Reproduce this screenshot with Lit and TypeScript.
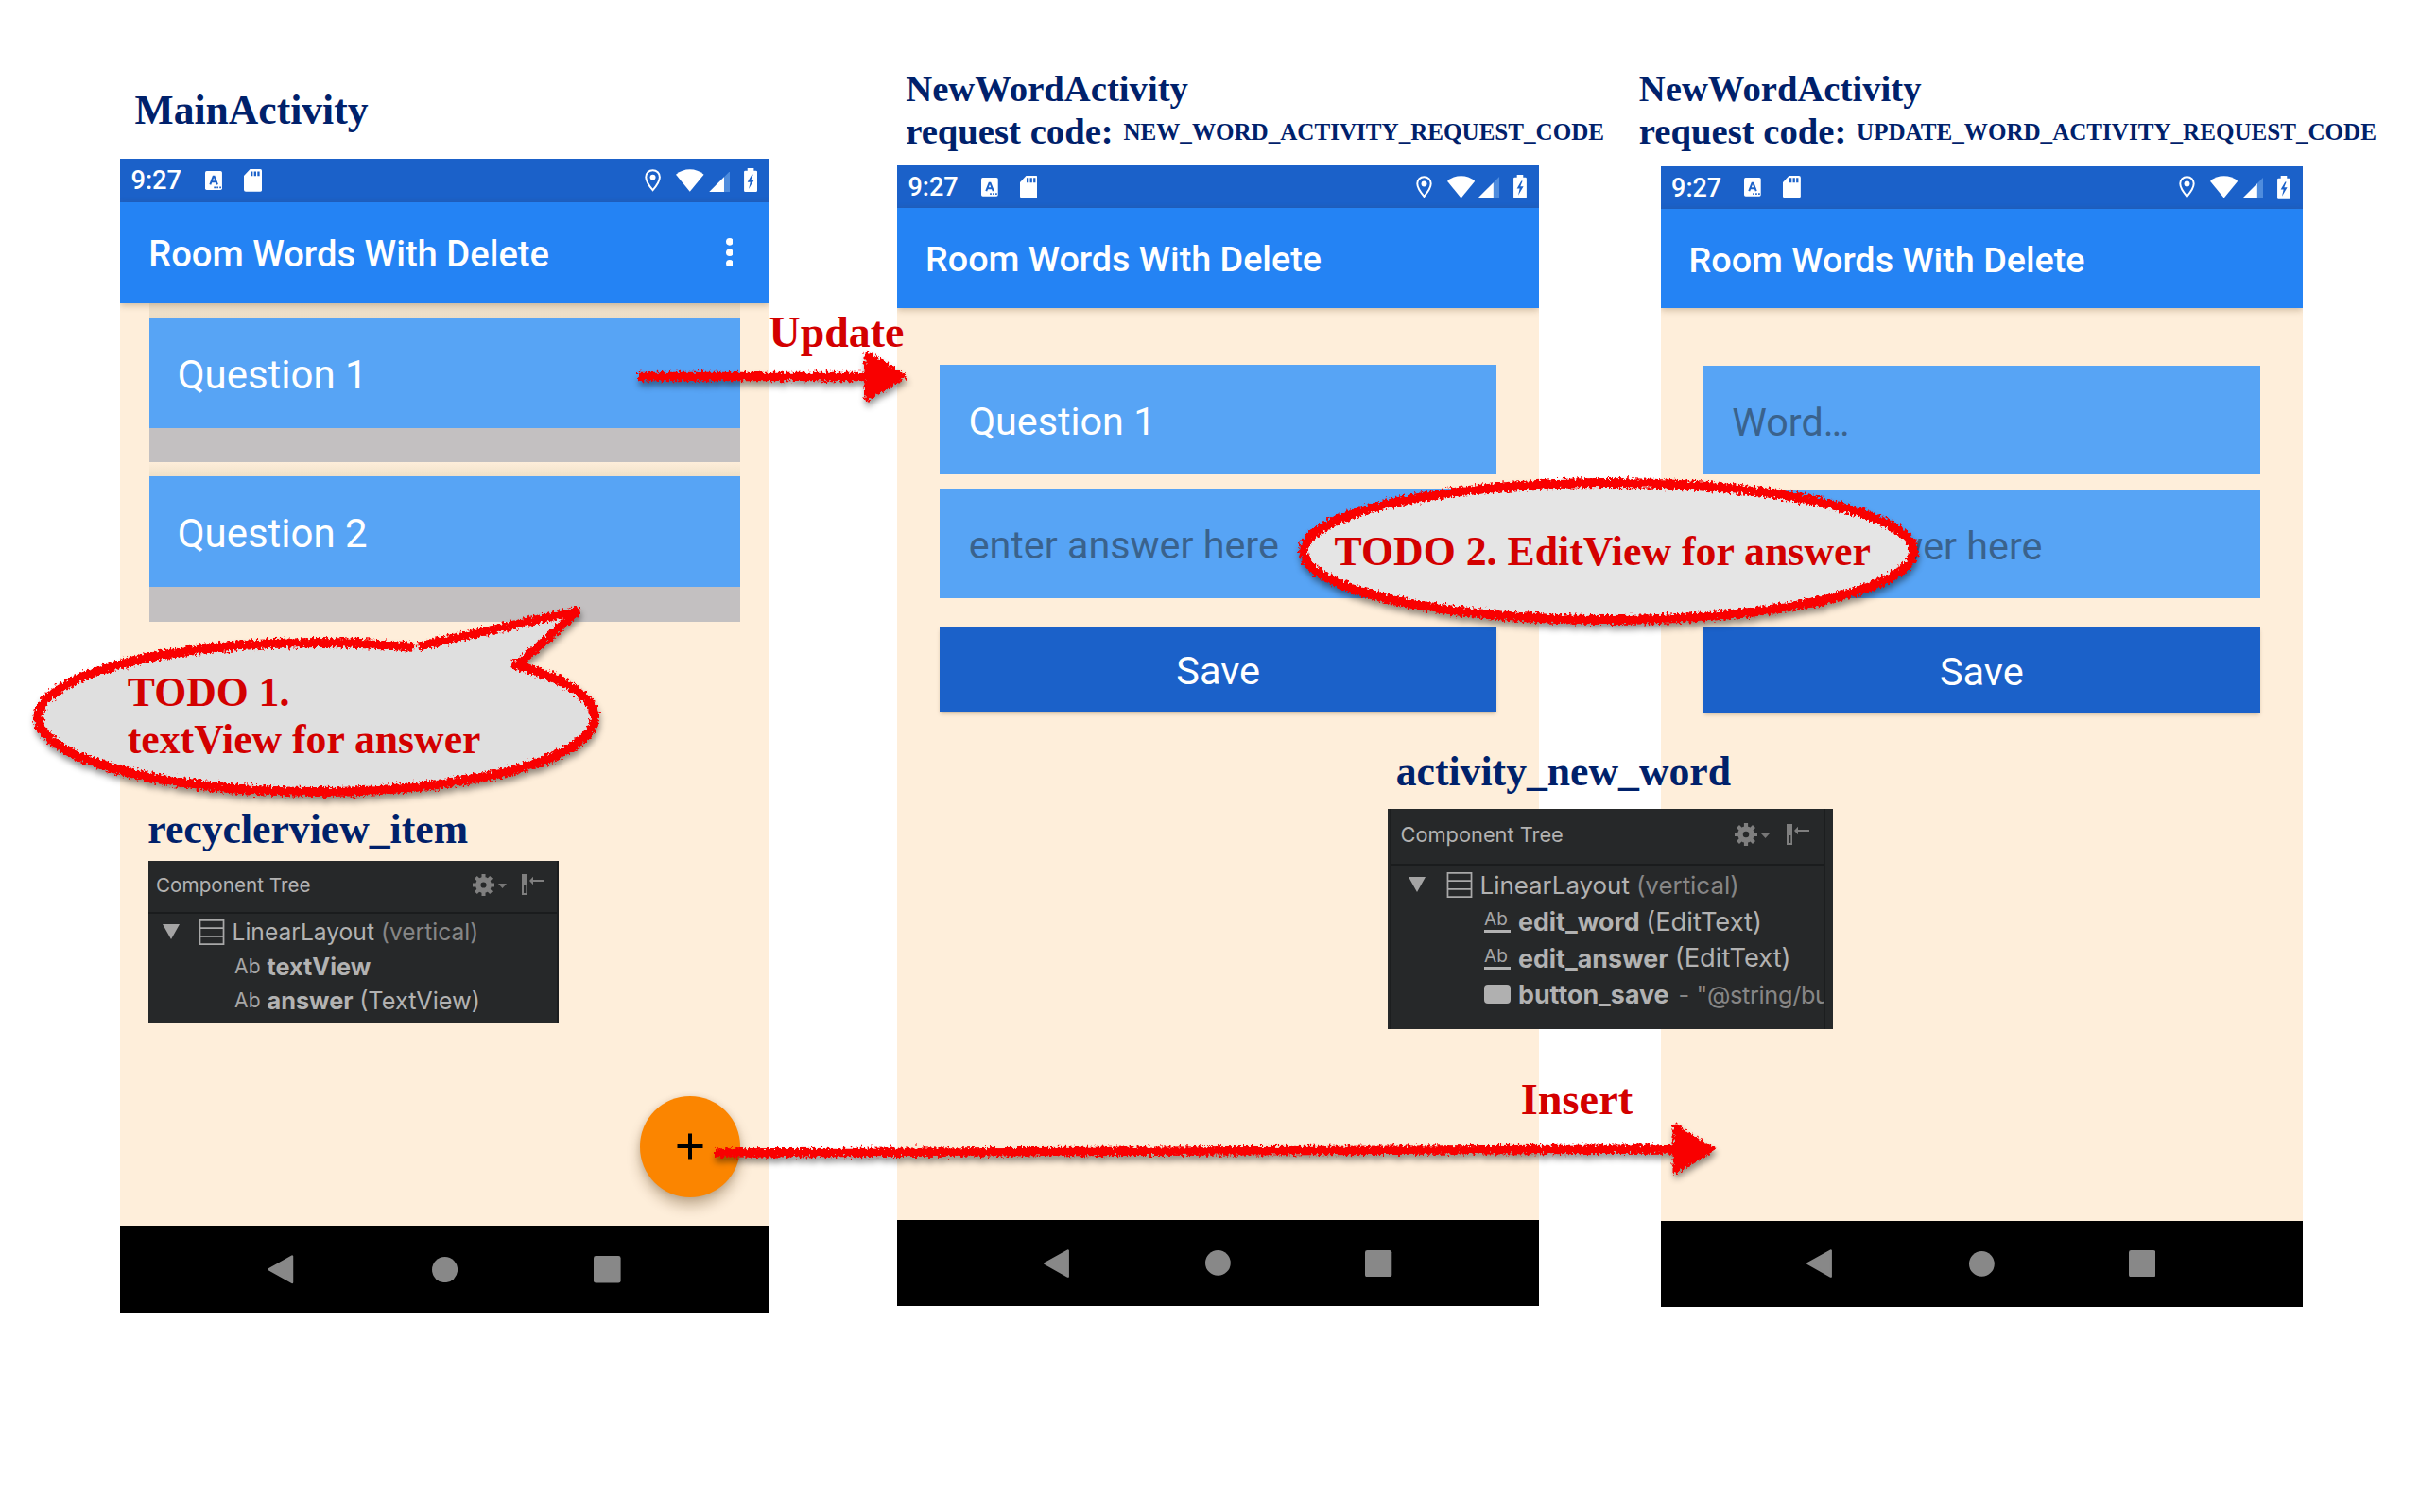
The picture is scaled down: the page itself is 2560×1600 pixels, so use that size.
import { LitElement, html, svg, css, nothing } from "lit";
import { customElement, property } from "lit/decorators.js";

/** Android screen, laid out in dp on a 360 x 640 grid; --dp sets its scale. */
@customElement("phone-screen")
export class PhoneScreen extends LitElement {
  @property({ type: Boolean }) menu = false;

  static styles = css`
    :host {
      display: flex;
      flex-direction: column;
      width: calc(var(--dp) * 360);
      height: calc(var(--dp) * 640);
      overflow: hidden;
      background: #feeeda;
      font-family: Roboto, "Liberation Sans", sans-serif;
      color: #fff;
    }
    svg { display: block; flex: none; }
    .status {
      display: flex;
      align-items: center;
      flex: none;
      box-sizing: border-box;
      height: calc(var(--dp) * 24);
      padding: 0 calc(var(--dp) * 6.8) 0 calc(var(--dp) * 6);
      background: #1b61c9;
    }
    .time {
      width: calc(var(--dp) * 41);
      font-size: calc(var(--dp) * 14.3);
      font-weight: 500;
      line-height: 1;
      padding-top: calc(var(--dp) * 1);
    }
    .badge { width: calc(var(--dp) * 9.4); height: calc(var(--dp) * 10.5); margin-right: calc(var(--dp) * 12.2); }
    .sd { width: calc(var(--dp) * 10); height: calc(var(--dp) * 12.5); }
    .grow { flex: 1; }
    .pin { width: calc(var(--dp) * 9); height: calc(var(--dp) * 12.5); margin-right: calc(var(--dp) * 8.5); }
    .wifi { width: calc(var(--dp) * 15.5); height: calc(var(--dp) * 12.5); margin-right: calc(var(--dp) * 2.4); }
    .signal { width: calc(var(--dp) * 11.7); height: calc(var(--dp) * 11.7); margin: calc(var(--dp) * 0.9) calc(var(--dp) * 7.9) 0 0; }
    .battery { width: calc(var(--dp) * 7.4); height: calc(var(--dp) * 13.1); }
    .appbar {
      display: flex;
      align-items: center;
      justify-content: space-between;
      flex: none;
      box-sizing: border-box;
      position: relative;
      z-index: 1;
      height: calc(var(--dp) * 56);
      padding: 0 calc(var(--dp) * 20.2) 0 calc(var(--dp) * 15.8);
      background: #2483f4;
      box-shadow: 0 2px 7px rgba(90, 60, 20, 0.3);
    }
    .title {
      font-size: calc(var(--dp) * 20);
      font-weight: 500;
      line-height: 1;
      padding-top: calc(var(--dp) * 2.2);
      white-space: nowrap;
    }
    .dots { width: calc(var(--dp) * 4); height: calc(var(--dp) * 16); }
    .content { flex: 1; min-height: 0; position: relative; }
    .nav {
      display: flex;
      align-items: center;
      flex: none;
      height: calc(var(--dp) * 48.200);
      background: #000;
    }
    .back { width: calc(var(--dp) * 14.4); height: calc(var(--dp) * 16); margin-left: calc(var(--dp) * 82); }
    .home { width: calc(var(--dp) * 14.2); height: calc(var(--dp) * 14.2); margin-left: calc(var(--dp) * 76.5); }
    .recent { width: calc(var(--dp) * 15); height: calc(var(--dp) * 15); margin-left: calc(var(--dp) * 75.4); }
  `;

  render() {
    return html`
      <div class="status">
        <span class="time">9:27</span>
        <svg class="badge" viewBox="0 0 54 60">
          <rect width="54" height="60" rx="5" fill="#fff" />
          <path d="M16 43L26 17h3L39 43M20 34h15" fill="none" stroke="#1b61c9" stroke-width="6" />
          <path d="M28 52h5M37 52h5M46 52h5" stroke="#1b61c9" stroke-width="5" />
        </svg>
        <svg class="sd" viewBox="0 0 58 72">
          <path d="M20 0h32q6 0 6 6v60q0 6-6 6H6q-6 0-6-6V21z" fill="#fff" />
          <path d="M25 7v15M36 7v15M47 7v15" stroke="#1b61c9" stroke-width="7" />
        </svg>
        <span class="grow"></span>
        <svg class="pin" viewBox="0 0 51 72">
          <path d="M25.5 3.5C13 3.5 3.5 13 3.5 25.500C3.500 41 25.500 67 25.500 67S47.500 41 47.500 25.500C47.500 13 38 3.500 25.500 3.500z" fill="none" stroke="#fff" stroke-width="6" />
          <circle cx="25.500" cy="26" r="9" fill="#fff" />
        </svg>
        <svg class="wifi" viewBox="0 0 88 71">
          <path d="M0 17C24-5 64-5 88 17L44 71z" fill="#fff" />
        </svg>
        <svg class="signal" viewBox="0 0 67 67">
          <path d="M67 0v67H0z" fill="#4f8cdd" />
          <path d="M48 19v48H0z" fill="#fff" />
        </svg>
        <svg class="battery" viewBox="0 0 42 75">
          <path d="M11 0h20v8h7q4 0 4 4v59q0 4-4 4H4q-4 0-4-4V12q0-4 4-4h7z" fill="#fff" />
          <path d="M25 20L11 44h9L15 66L32 37H22l7-17z" fill="#1b61c9" />
        </svg>
      </div>
      <div class="appbar">
        <span class="title">Room Words With Delete</span>
        ${this.menu
          ? html`<svg class="dots" viewBox="0 0 4 16" fill="#fff">
              <circle cx="2" cy="2" r="2" /><circle cx="2" cy="8" r="2" /><circle cx="2" cy="14" r="2" />
            </svg>`
          : nothing}
      </div>
      <div class="content"><slot></slot></div>
      <div class="nav">
        <svg class="back" viewBox="0 0 58 64"><path d="M55 3v58L3 32z" fill="#888" stroke="#888" stroke-width="5" stroke-linejoin="round" /></svg>
        <svg class="home" viewBox="0 0 56 56"><circle cx="28" cy="28" r="28" fill="#888" /></svg>
        <svg class="recent" viewBox="0 0 60 60"><rect width="60" height="60" rx="5" fill="#888" /></svg>
      </div>
    `;
  }
}

interface TreeRow {
  icon: "text" | "edit" | "button";
  name: string;
  type?: string;
  value?: string;
}

/** Component Tree tool window; sizes are in px through custom properties. */
@customElement("component-tree")
export class ComponentTree extends LitElement {
  @property({ attribute: false }) rows: TreeRow[] = [];

  static styles = css`
    :host {
      display: flex;
      background: #262829;
      color: #b2b2b2;
      font-family: Inter, "Liberation Sans", sans-serif;
      overflow: hidden;
    }
    svg { display: block; flex: none; }
    .strip { flex: none; width: var(--strip); box-sizing: border-box; border-right: 2px solid #1c1e1f; }
    .body { flex: 1; min-width: 0; overflow: hidden; border-right: 2px solid #1c1e1f; }
    .head {
      display: flex;
      align-items: center;
      box-sizing: border-box;
      height: var(--head);
      padding: 0 var(--head-right) 4px var(--head-left);
      border-bottom: 2px solid #1a1c1d;
      margin-bottom: 1px;
      font-size: var(--title);
      white-space: nowrap;
    }
    .head span { flex: 1; }
    .gear { width: var(--gear); height: var(--gear); margin-right: 4px; }
    .caret { width: 9px; height: 5px; margin: 3px var(--caret-gap) 0 0; }
    .hide { width: 24px; height: 22px; }
    .row {
      display: flex;
      align-items: center;
      height: var(--row);
      white-space: nowrap;
      font-size: var(--name);
    }
    .root { padding-left: var(--tri-left); font-size: var(--root); }
    .tri { width: 18px; height: 16px; margin-right: var(--tri-gap); }
    .layout { width: 28px; height: 27px; margin-right: 7.5px; }
    .dim { color: #868686; margin-left: 7px; }
    .child { box-sizing: border-box; padding: var(--nudge) 0 0 var(--child-left); }
    .slot { flex: none; width: var(--slot); }
    .ab { display: block; font-size: var(--ab); line-height: 1; color: #a6a6a6; letter-spacing: 0.2px; }
    .edit { width: 28px; border-bottom: 3.5px solid #b2b2b2; padding-bottom: 2px; }
    .btn { width: 28px; height: 20px; border-radius: 4px; background: #b0b0b0; }
    b { font-weight: 700; }
    .type { margin-left: 6.500px; font-size: var(--type); }
    .value { color: #868686; margin-left: 10px; font-size: 25.300px; word-spacing: 1px; letter-spacing: -0.35px; }
    .edge { flex: none; width: var(--edge); }
  `;

  private icon(kind: TreeRow["icon"]) {
    if (kind === "button") return html`<div class="btn"></div>`;
    return html`<span class="ab ${kind}">Ab</span>`;
  }

  render() {
    return html`
      <div class="strip" part="strip"></div>
      <div class="body">
        <div class="head">
          <span>Component Tree</span>
          <svg class="gear" viewBox="-12 -12 24 24">
            <circle r="6" fill="none" stroke="#7f7f7f" stroke-width="5.500" />
            ${[0, 45, 90, 135].map((a) => svg`<path d="M0-12v4.500M0 12v-4.500" stroke="#7f7f7f" stroke-width="4.200" transform="rotate(${a})"/>`)}
          </svg>
          <svg class="caret" viewBox="0 0 9 5"><path d="M0 0h9L4.500 5z" fill="#777" /></svg>
          <svg class="hide" viewBox="0 0 72 66">
            <path d="M0 0h18v66H0zM6 36v24h7V36z" fill="#7f7f7f" fill-rule="evenodd" />
            <path d="M28 21H72" stroke="#7f7f7f" stroke-width="6" />
            <path d="M24 21l12-13v26z" fill="#7f7f7f" />
          </svg>
        </div>
        <div class="row root">
          <svg class="tri" viewBox="0 0 18 16"><path d="M0 0h18L9 16z" fill="#a4a4a4" /></svg>
          <svg class="layout" viewBox="0 0 28 28" fill="none" stroke="#a8a8a8" stroke-width="1.800">
            <path d="M1 1h26v26H1zM1 9.500h26M1 18.500h26" />
          </svg>
          <span>LinearLayout</span><span class="dim">(vertical)</span>
        </div>
        ${this.rows.map(
          (r) => html`<div class="row child">
            <div class="slot">${this.icon(r.icon)}</div>
            <b>${r.name}</b>
            ${r.type ? html`<span class="type">${r.type}</span>` : nothing}
            ${r.value ? html`<span class="value">${r.value}</span>` : nothing}
          </div>`
        )}
      </div>
      <div class="edge"></div>
    `;
  }
}

const itemRows: TreeRow[] = [
  { icon: "text", name: "textView" },
  { icon: "text", name: "answer", type: "(TextView)" },
];
const formRows: TreeRow[] = [
  { icon: "edit", name: "edit_word", type: "(EditText)" },
  { icon: "edit", name: "edit_answer", type: "(EditText)" },
  { icon: "button", name: "button_save", value: '- "@string/bu' },
];

@customElement("app-root")
export class AppRoot extends LitElement {
  static styles = css`
    :host {
      display: block;
      position: relative;
      width: 2560px;
      height: 1600px;
      overflow: hidden;
      background: #fff;
      font-family: "Liberation Serif", "Times New Roman", serif;
    }
    .board { display: flex; align-items: flex-start; padding-left: 127px; }
    .col { flex: none; }
    .main { width: 687px; --dp: 1.9083px; }
    .update { width: 679px; --dp: 1.8861px; margin-left: 135.200px; }
    .insert { width: 679px; --dp: 1.8861px; margin-left: 128.600px; }
    .heading {
      box-sizing: border-box;
      color: #00216b;
      font-weight: 700;
      font-size: 38.700px;
      line-height: 45px;
      white-space: nowrap;
    }
    .main .heading { height: 168px; padding: 91px 0 0 15.500px; font-size: 43.600px; line-height: 50px; }
    .update .heading { height: 175px; padding: 72.300px 0 0 9px; }
    .insert .heading { height: 175.600px; padding-top: 72px; margin-left: -23px; }
    .code { font-size: 25.080px; line-height: 0; vertical-align: 4px; margin-left: 10.700px; }

    .list { display: flex; flex-direction: column; padding: 0 calc(var(--dp) * 16); }
    .item { padding-top: calc(var(--dp) * 8); background: linear-gradient(#feeeda, #efe0c8) top / 100% calc(var(--dp) * 8) no-repeat; }
    .item:first-child { background-image: linear-gradient(#f0e2cc, #ecddc6); }
    .word, .field {
      display: flex;
      align-items: center;
      box-sizing: border-box;
      height: calc(var(--dp) * 61.300);
      padding: calc(var(--dp) * 2.400) 0 0 calc(var(--dp) * 15.800);
      background: #57a4f5;
      font-size: calc(var(--dp) * 22);
      line-height: 1;
    }
    .answer { height: calc(var(--dp) * 19); background: #c3c0c1; }
    .form { display: flex; flex-direction: column; gap: calc(var(--dp) * 8); padding: calc(var(--dp) * 32) calc(var(--dp) * 24); }
    .hint { color: #3a628c; }
    .field { padding: calc(var(--dp) * 3.200) 0 0 calc(var(--dp) * 16); font-size: calc(var(--dp) * 21.900); }
    .save {
      display: flex;
      align-items: center;
      justify-content: center;
      box-sizing: border-box;
      height: calc(var(--dp) * 48);
      padding-top: calc(var(--dp) * 3);
      margin-top: calc(var(--dp) * 8);
      background: #1b61c9;
      font-size: calc(var(--dp) * 22);
      line-height: 1;
      box-shadow: 0 3px 4px -1px rgba(90, 60, 20, 0.3);
    }
    .fab {
      position: absolute;
      right: calc(var(--dp) * 16);
      bottom: calc(var(--dp) * 16);
      display: flex;
      align-items: center;
      justify-content: center;
      width: calc(var(--dp) * 56);
      height: calc(var(--dp) * 56);
      border-radius: 50%;
      background: #fb8500;
      box-shadow: 0 9px 14px rgba(80, 50, 10, 0.32), 0 1px 6px rgba(80, 50, 10, 0.15);
    }
    .fab svg { width: 28px; height: 28px; }

    .note { position: absolute; font-weight: 700; font-size: 43.700px; line-height: 50px; white-space: nowrap; }
    .navy { color: #00216b; }
    .red { color: #d30000; }
    .n-item { left: 156.300px; top: 851.500px; }
    .n-form { left: 1476.700px; top: 791px; }
    .n-update { left: 813.500px; top: 326.500px; font-size: 45.900px; }
    .n-insert { left: 1608.800px; top: 1138.500px; font-size: 46.300px; }
    .n-todo1 { left: 134.800px; top: 707px; }
    .n-todo2 { left: 1411.600px; top: 557.800px; font-size: 43.800px; }
    .ink { position: absolute; left: 0; top: 0; width: 2560px; height: 1600px; }

    component-tree { position: absolute; }
    .tree-item {
      left: 157px; top: 911px; width: 434px; height: 172px;
      --strip: 0px; --edge: 0px; --head: 56px; --head-left: 8px; --head-right: 13px;
      --title: 20.700px; --gear: 23px; --caret-gap: 16px;
      --row: 36.300px; --root: 24.600px; --name: 25.300px; --type: 25.300px; --nudge: 0px;
      --tri-left: 15px; --tri-gap: 20px; --child-left: 91px; --slot: 34.500px; --ab: 21px;
    }
    .tree-item::part(strip) { border: 0; }
    .tree-form {
      left: 1468px; top: 856px; width: 471px; height: 233px;
      --strip: 4px; --edge: 8px; --head: 60px; --head-left: 9.500px; --head-right: 15px;
      --title: 21.800px; --gear: 24px; --caret-gap: 18px;
      --row: 38.300px; --root: 25.900px; --name: 26.800px; --type: 27.300px; --nudge: 2px;
      --tri-left: 18px; --tri-gap: 22px; --child-left: 98px; --slot: 36px; --ab: 19px;
    }
  `;

  private field(text: string, hint = false) {
    return html`<div class="field ${hint ? "hint" : ""}">${text}</div>`;
  }

  private item(text: string) {
    return html`<div class="item"><div class="word">${text}</div><div class="answer"></div></div>`;
  }

  private callouts() {
    return html`<svg class="ink" viewBox="0 0 2560 1600">
      <defs>
        <filter id="brush" filterUnits="userSpaceOnUse" x="0" y="0" width="2560" height="1600" color-interpolation-filters="sRGB">
          <feTurbulence type="fractalNoise" baseFrequency="0.38 0.3" numOctaves="2" seed="7" result="n" />
          <feDisplacementMap in="SourceGraphic" in2="n" scale="9" xChannelSelector="R" yChannelSelector="G" />
        </filter>
        <filter id="drop" filterUnits="userSpaceOnUse" x="0" y="0" width="2560" height="1600" color-interpolation-filters="sRGB">
          <feDropShadow dx="1" dy="5" stdDeviation="3" flood-color="#000" flood-opacity="0.42" />
        </filter>
      </defs>
      <g filter="url(#drop)">
        <path d="M441 684.500L615 645.500L546 704A294.500 79 0 0 1 629 759A294.500 79 0 0 1 334.500 838A294.500 79 0 0 1 40.500 759A294.500 79 0 0 1 437 685z" fill="#dfdfdf" />
        <g filter="url(#brush)" fill="none" stroke="#f90000" stroke-width="10">
          <path d="M442 684L612 646L547 704" stroke-width="9" stroke-miterlimit="3" />
          <path d="M541 702.500A294.500 79 0 0 1 629 759A294.500 79 0 0 1 334.500 838A294.500 79 0 0 1 40.500 759A294.500 79 0 0 1 437.500 685" />
        </g>
      </g>
      <g filter="url(#drop)">
        <ellipse cx="1701.500" cy="583.500" rx="322.500" ry="72.500" fill="#e5e5e5" />
        <ellipse cx="1701.500" cy="583.500" rx="322.500" ry="72.500" fill="none" stroke="#f90000" stroke-width="10" filter="url(#brush)" />
      </g>
      <g filter="url(#drop)">
        <g filter="url(#brush)" stroke="#f90000" fill="#f90000">
          <path d="M675 398.500H918" stroke-width="9.500" />
          <path d="M917 374L956 398L917 422z" stroke-width="5" stroke-linejoin="round" />
          <path d="M756 1220L1772 1216" stroke-width="9.500" />
          <path d="M1772 1192L1811 1216L1772 1240z" stroke-width="5" stroke-linejoin="round" />
        </g>
      </g>
    </svg>`;
  }

  render() {
    return html`
      <div class="board">
        <section class="col main">
          <div class="heading">MainActivity</div>
          <phone-screen menu>
            <div class="list">${this.item("Question 1")}${this.item("Question 2")}</div>
            <div class="fab">
              <svg viewBox="0 0 28 28"><path d="M14 0.500v27M0.500 14h27" stroke="#000" stroke-width="4" /></svg>
            </div>
          </phone-screen>
        </section>
        <section class="col update">
          <div class="heading">NewWordActivity<br />request code:<span class="code">NEW_WORD_ACTIVITY_REQUEST_CODE</span></div>
          <phone-screen>
            <div class="form">
              ${this.field("Question 1")}${this.field("enter answer here", true)}
              <div class="save">Save</div>
            </div>
          </phone-screen>
        </section>
        <section class="col insert">
          <div class="heading">NewWordActivity<br />request code:<span class="code">UPDATE_WORD_ACTIVITY_REQUEST_CODE</span></div>
          <phone-screen>
            <div class="form">
              ${this.field("Word…", true)}${this.field("enter answer here", true)}
              <div class="save">Save</div>
            </div>
          </phone-screen>
        </section>
      </div>

      <div class="note navy n-item">recyclerview_item</div>
      <component-tree class="tree-item" .rows=${itemRows}></component-tree>
      <div class="note navy n-form">activity_new_word</div>
      <component-tree class="tree-form" .rows=${formRows}></component-tree>

      ${this.callouts()}
      <div class="note red n-update">Update</div>
      <div class="note red n-insert">Insert</div>
      <div class="note red n-todo1">TODO 1.<br />textView for answer</div>
      <div class="note red n-todo2">TODO 2. EditView for answer</div>
    `;
  }
}
